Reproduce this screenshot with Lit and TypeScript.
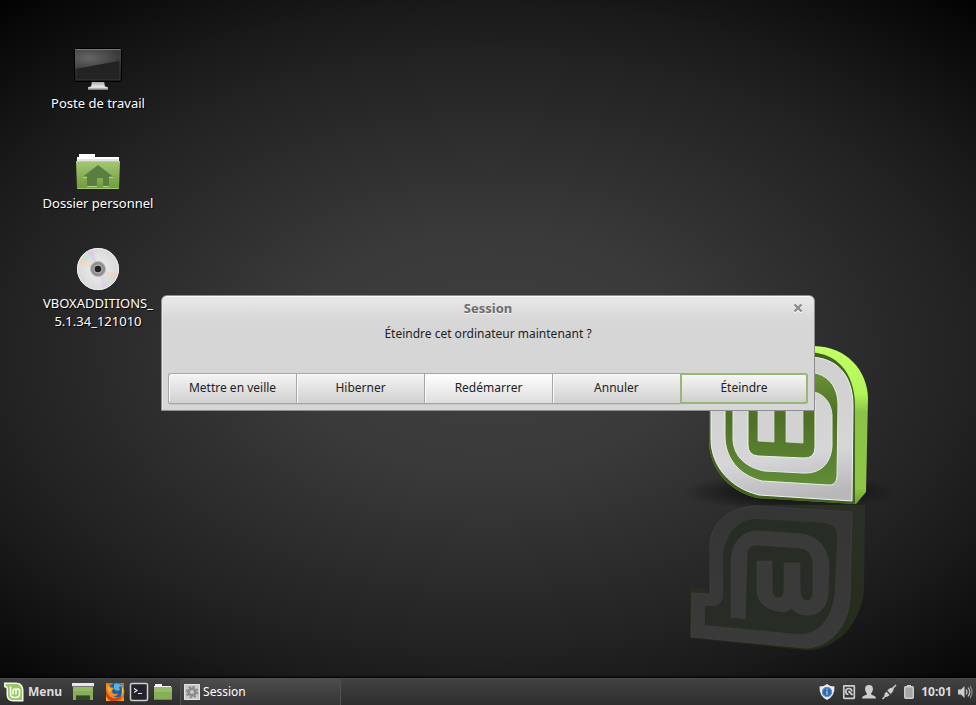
import { LitElement, html, css, svg } from "lit";
import { customElement, property } from "lit/decorators.js";
import { classMap } from "lit/directives/class-map.js";

const monitorIcon = html`<svg class="art" viewBox="0 0 48 48" aria-hidden="true">
  <defs>
    <linearGradient id="scr" x1="0" y1="0" x2="0" y2="1"><stop offset="0" stop-color="#4e4e4e" /><stop offset="1" stop-color="#1c1c1c" /></linearGradient>
    <radialGradient id="gls" cx="0.300" cy="0.450" r="0.700"><stop offset="0" stop-color="#7c7c7c" /><stop offset="1" stop-color="#404040" /></radialGradient>
    <linearGradient id="std" x1="0" y1="0" x2="0" y2="1"><stop offset="0" stop-color="#999" /><stop offset="1" stop-color="#eee" /></linearGradient>
  </defs>
  <path d="M18 36h12l1 6H17z" fill="url(#std)" />
  <path d="M14 44.500V43q0-1.500 3-1.500h14q3 0 3 1.500v1.500z" fill="#ddd" />
  <path d="M14 44h20" stroke="#888" />
  <rect x="0.500" y="3.500" width="47" height="33" rx="1" fill="url(#scr)" stroke="#000" />
  <rect x="2.500" y="5.500" width="43" height="29" fill="#232323" stroke="#2f2f2f" />
  <path d="M1 4h46v11.500L1 24z" fill="url(#gls)" opacity="0.750" />
  <path d="M1.500 4.500h45" stroke="#777" />
</svg>`;

const homeFolderIcon = html`<svg class="art" viewBox="0 0 48 48" aria-hidden="true">
  <defs><linearGradient id="fld" x1="0" y1="0" x2="0" y2="1"><stop offset="0" stop-color="#a4c873" /><stop offset="1" stop-color="#6f9b3a" /></linearGradient></defs>
  <path d="M5 9h16v3h24v6H3v-6h2z" fill="#fff" />
  <path d="M3.500 15h41" stroke="#c8c8c8" />
  <path d="M2 16h44l-1 28H3z" fill="url(#fld)" />
  <path d="M2.500 16.500h43M3.500 43.500h41" stroke="#bcdc90" opacity="0.700" />
  <path d="M9 32.500h4M35 32.500h4M13 41.500h10M29 41.500h6M23 32.500h6" stroke="#b4d68a" />
  <path d="M24 20 9 31.500h4V41h10v-8h6v8h6v-9.500h4z" fill="#597f40" />
</svg>`;

const discIcon = html`<svg class="art" viewBox="0 0 48 48" aria-hidden="true">
  <defs><radialGradient id="dsc"><stop offset="0" stop-color="#f2f2f2" /><stop offset="1" stop-color="#d8d8d8" /></radialGradient></defs>
  <circle cx="24" cy="24" r="21" fill="url(#dsc)" />
  <g opacity="0.500">
    <path d="M24 24 4.500 19 8 11z" fill="#f7d3b6" />
    <path d="M24 24 8 11l5-4z" fill="#b8ead8" />
    <path d="M24 24 13 7l6-3z" fill="#dcc0ee" />
    <path d="M24 24 43.500 29 40 36z" fill="#f7d0b0" />
    <path d="M24 24 40 36l-5 5z" fill="#bfead0" />
    <path d="M24 24 35 41l-6 3z" fill="#e2c4f0" />
  </g>
  <circle cx="24" cy="24" r="20.500" fill="none" stroke="#f0f0f0" />
  <circle cx="24" cy="24" r="7.500" fill="#8f8f8f" stroke="#b8b8b8" />
  <circle cx="24" cy="24" r="4.500" fill="#b0b0b0" />
  <circle cx="24" cy="24" r="3.300" fill="#202020" />
</svg>`;

const wallpaper = svg`
  <defs>
    <linearGradient id="side" x1="0" y1="346" x2="0" y2="504" gradientUnits="userSpaceOnUse">
      <stop offset="0" stop-color="#c2ff68" /><stop offset="0.300" stop-color="#b2f556" /><stop offset="0.420" stop-color="#8cc247" /><stop offset="0.900" stop-color="#8fc648" /><stop offset="1" stop-color="#6d9c30" />
    </linearGradient>
    <linearGradient id="face" x1="760" y1="360" x2="780" y2="500" gradientUnits="userSpaceOnUse">
      <stop offset="0" stop-color="#cfcfcf" /><stop offset="0.700" stop-color="#d6d6d8" /><stop offset="1" stop-color="#b8b8ba" />
    </linearGradient>
    <linearGradient id="well" x1="0" y1="370" x2="0" y2="485" gradientUnits="userSpaceOnUse">
      <stop offset="0" stop-color="#6c9338" /><stop offset="0.400" stop-color="#4d6f26" /><stop offset="1" stop-color="#628c38" />
    </linearGradient>
    <linearGradient id="mside" x1="0" y1="505" x2="0" y2="650" gradientUnits="userSpaceOnUse">
      <stop offset="0" stop-color="#2b3027" /><stop offset="1" stop-color="#232c19" />
    </linearGradient>
    <linearGradient id="mface" x1="0" y1="505" x2="0" y2="650" gradientUnits="userSpaceOnUse">
      <stop offset="0" stop-color="#353535" /><stop offset="1" stop-color="#3a3a3a" />
    </linearGradient>
    <radialGradient id="cast"><stop offset="0" stop-color="#000" stop-opacity="0.700" /><stop offset="0.600" stop-color="#000" stop-opacity="0.350" /><stop offset="1" stop-color="#000" stop-opacity="0" /></radialGradient>
  </defs>
  <ellipse cx="790" cy="492" rx="108" ry="18" fill="url(#cast)" />
  <path d="M690 587 710 589V545C711 522 730 506 757 505L865 505 864 590C861 622 838 651 805 650L690 638Z" fill="url(#mside)" />
  <path d="M692 593 710 594V545C711 522 730 507 755 506L852 512 850 598C848 630 827 648 805 648L691 637Z" fill="url(#mface)" stroke="#424242" stroke-width="0.700" />
  <path d="M705 606H713Q722 606 723 596V557C724 535 738 519 756 519L825 523Q836 525 837 535L835 590C833 620 816 636 797 634L705 625Z" fill="#272c24" />
  <path d="M731 617V560C732 542 743 531 757 531L802 534C820 537 829 550 829 568L828 592C828 606 820 615 808 615 801 615 795 613 792 608 787 612 783 612 778 611 764 609 757 600 757 590V561H772V590Q772 598 778 598 784 598 784 590V563H800V590Q801 601 807 601 813 600 813 592V566C813 554 808 549 800 548L757 545Q747 545 747 555L745 619Z" fill="#3a3a3a" stroke="#414141" stroke-width="0.600" />
  <path d="M709 346H814C847 347 867 370 868 398L866 492 856 504 757 498C728 491 709 468 709 440Z" fill="url(#side)" />
  <path d="M709 352H806C838 352 854 373 855 404V504L757 498C728 491 709 468 709 440Z" fill="#41631f" />
  <path d="M711 357H808C837 357 853 375 853 406L852 501 759 495C730 488 711 466 711 439Z" fill="url(#face)" stroke="#f2f2f2" />
  <path d="M725 372H808C829 373 838 388 838 405L837 477Q836 486 828 485L762 481C738 475 725 457 725 436Z" fill="url(#well)" stroke="#e9efe0" />
  <path d="M733 391H806C822 391 831 401 832 415V446C831 463 821 474 803 473L764 471C745 467 734 456 733 440Z" fill="url(#face)" stroke="#e8e8e8" />
  <path d="M748 400H815V447Q815 459 803 458L758 456Q748 455 748 445Z" fill="url(#well)" stroke="#eef2e8" />
  <path d="M758 400H774V442L758 441ZM786 400H803V443L786 442Z" fill="#d2d2d2" stroke="#e4e4e4" stroke-width="0.700" />
`;

const menuIcon = html`<svg class="i20" viewBox="0 0 20 20" aria-hidden="true">
  <path d="M0 0.500h11.500C17 0.500 19.500 4 19.500 8.500v11H9.500C4.500 19.500 2.500 16.500 2.500 12.500V7.500C2.500 6 2 5.500 0 5.200z" fill="#f4f8ee" />
  <path d="M1.500 2h10C16 2 18 4.500 18 8.500V18H9.500C5.500 18 4 15.500 4 12.500V7C4 5 3 4.200 1.500 4z" fill="#98c864" />
  <path d="M6.500 4.500v7q0 4 4 4h1q4 0 4-4V9q0-2-1.700-2T12 9v3.500M12 9q0-2-1.500-2T9 9v3.500" fill="none" stroke="#fff" stroke-width="1.500" />
</svg>`;

const showDesktopIcon = html`<svg class="i22" viewBox="0 0 22 20" aria-hidden="true">
  <path d="M0 1h22v3H0z" fill="#e8e8e8" /><path d="M0 4.500h22" stroke="#777" />
  <path d="M1 5h20v13H1z" fill="#86b058" /><path d="M1 5h20v4H1z" fill="#93bb66" />
  <path d="M4 13h14v5H4z" fill="#35452a" /><path d="M4 13.500h14" stroke="#547038" />
</svg>`;

const firefoxIcon = html`<svg class="i20" viewBox="0 0 20 20" aria-hidden="true">
  <path d="M1 1h18v18H1z" fill="#e66a1b" />
  <circle cx="11.500" cy="8" r="7.500" fill="#1f5f9e" />
  <path d="M9 2q5-2 8 2l-3 1 1 3-3 1-3-2z" fill="#58b2dc" />
  <path d="M1 1q3 1 4 4l4 1-2 3q0 3 4 3l2-1q-1 4-5 3 5 4 9-1 2-3 1-8 2 2 1 7-2 6-8 7H1z" fill="#ef8b20" />
  <path d="M1 7q1 7 7 9 6 1 9-4 0 6-7 7H5Q1 16 1 12z" fill="#cf4317" />
  <path d="M16 2q3 4 2 9l-2 4q2-7 0-13z" fill="#ffcd38" />
  <path d="M1 19v-4q2 3 5 4zM19 19v-4q-2 3-5 4z" fill="#f5a728" />
  <path d="M3 4 7 7 5 10Q2 8 3 4z" fill="#f7b038" />
</svg>`;

const terminalIcon = html`<svg class="i20" viewBox="0 0 20 20" aria-hidden="true">
  <rect x="1.500" y="1.500" width="17" height="17" rx="1.500" fill="#23232b" stroke="#cfcfcf" stroke-width="1.500" />
  <path d="m5 6.500 3 2-3 2M9 11.500h4" fill="none" stroke="#e6e6e6" stroke-width="1.200" />
</svg>`;

const folderIcon = html`<svg class="i20" viewBox="0 0 20 20" aria-hidden="true">
  <path d="M2 2h7v2h9v3H1V4h1z" fill="#f5f5f5" /><path d="M1 5h18v13H1z" fill="#86b058" /><path d="M1 5h18v5H1z" fill="#95bc69" /><path d="M1 17.500h18" stroke="#668c3e" />
</svg>`;

const gearIcon = html`<svg class="i16" viewBox="0 0 16 16" aria-hidden="true">
  <rect width="16" height="16" rx="1" fill="#c9c9c9" /><path d="M0.500 0.500h15v15h-15z" fill="none" stroke="#e2e2e2" />
  <circle cx="8" cy="8" r="5.300" fill="none" stroke="#8a8a8a" stroke-width="2" stroke-dasharray="2.100 2.060" />
  <circle cx="8" cy="8" r="3.400" fill="none" stroke="#8a8a8a" stroke-width="2.600" />
</svg>`;

const shieldIcon = html`<svg class="i16" viewBox="0 0 16 16" aria-hidden="true">
  <path d="M8 0q3 2.500 7.500 2.500Q16 12 8 16 0 12 0.500 2.500 5 2.500 8 0z" fill="#ececec" />
  <circle cx="8" cy="8" r="5" fill="#2d68ad" /><circle cx="8" cy="8" r="4.500" fill="none" stroke="#5f97d2" />
  <path d="M8 6.800v4M8 4.700v1.300" stroke="#a9c9ec" stroke-width="1.400" />
</svg>`;

const updateIcon = html`<svg class="i16" viewBox="0 0 16 16" aria-hidden="true">
  <rect x="2.800" y="1.800" width="10.500" height="12.500" rx="0.500" fill="none" stroke="#cdcdcd" stroke-width="1.700" />
  <path d="M7.500 10.500A3 3 0 1 1 10.800 7.500" fill="none" stroke="#cdcdcd" stroke-width="1.700" />
  <path d="m7.500 7 4 4" stroke="#cdcdcd" stroke-width="1.800" />
</svg>`;

const userIcon = html`<svg class="i16" viewBox="0 0 16 16" aria-hidden="true">
  <path d="M8 1c3 0 4.200 2 3.900 4.500C11.600 8 10.500 8.500 10 10c0 1.500 5 1 5 4.500H1C1 11 6 11.500 6 10 5.500 8.500 4.400 8 4.100 5.500 3.800 3 5 1 8 1z" fill="#cdcdcd" />
</svg>`;

const networkIcon = html`<svg class="i16" viewBox="0 0 16 16" aria-hidden="true">
  <path d="M1.500 15 5 11.500M11 5l4-4" stroke="#cdcdcd" stroke-width="1.500" />
  <path d="M5.300 7.500 8.700 10.900Q7 13.200 3.300 12.900 3 9.500 5.300 7.500z" fill="#cdcdcd" />
  <path d="M6.300 6.500 9.700 9.900Q12.800 7.500 12.700 3.500 8.500 3.400 6.300 6.500z" fill="#cdcdcd" />
</svg>`;

const batteryIcon = html`<svg class="i16" viewBox="0 0 16 16" aria-hidden="true">
  <path d="M6 1h4v2h-4z" fill="#cdcdcd" /><rect x="3.700" y="2.800" width="8.600" height="11.500" rx="1" fill="#a5a5a5" stroke="#cdcdcd" stroke-width="1.400" />
</svg>`;

const volumeIcon = html`<svg class="i16" viewBox="0 0 16 16" aria-hidden="true">
  <path d="M1 5.500h3L7.500 2v12L4 10.500H1z" fill="#cdcdcd" />
  <path d="M9 5.500q2 2.500 0 5M11 3.500q3.500 4.500 0 9" fill="none" stroke="#c4c4c4" stroke-width="1.200" />
  <path d="M13 1.800q4 6.200 0 12.400" fill="none" stroke="#8a8a8a" stroke-width="1.200" />
</svg>`;

@customElement("desktop-shortcut")
export class DesktopShortcut extends LitElement {
  @property({ attribute: false }) icon: unknown;
  @property({ attribute: false }) lines: string[] = [];

  static styles = css`
    button {
      display: flex;
      flex-direction: column;
      align-items: center;
      width: 120px;
      min-height: 100px;
      padding: 0;
      border: 0;
      background: none;
      color: #fff;
      font: 13px/18px "Noto Sans", sans-serif;
      text-shadow: 1px 1px 1px #000;
    }
    .art { width: 48px; height: 48px; margin-bottom: 1px; }
    .line { display: block; white-space: nowrap; }
  `;

  render() {
    return html`<button type="button">${this.icon}${this.lines.map((l) => html`<span class="line">${l}</span>`)}</button>`;
  }
}

@customElement("session-dialog")
export class SessionDialog extends LitElement {
  static styles = css`
    :host { display: block; font: 12px/18px "Noto Sans", sans-serif; }
    .dialog {
      box-sizing: border-box;
      padding: 2px 6px 6px;
      border: 1px solid #8e8e8e;
      border-radius: 6px 6px 0 0;
      background: linear-gradient(#e9e9e9, #d6d6d6 26px);
      box-shadow: inset 0 1px #fafafa, inset 1px 0 #e6e6e6;
      color: #222;
    }
    .title { display: grid; grid-template-columns: 20px 1fr 20px; align-items: center; }
    h1 {
      grid-column: 2;
      margin: 0;
      text-align: center;
      font-size: 13px;
      line-height: 20px;
      color: #6b6b6b;
      text-shadow: 0 1px #f4f4f4;
    }
    .close { display: grid; place-items: center; height: 20px; padding: 0; border: 0; background: none; }
    .close svg { width: 10px; height: 10px; }
    p { margin: 7px 0 30px; text-align: center; }
    .actions { display: grid; grid-template-columns: repeat(5, 1fr); }
    .action {
      height: 31px;
      padding: 0;
      border: 1px solid #a6a6a6;
      border-right-width: 0;
      background: linear-gradient(#f5f5f5, #d0d0d0);
      box-shadow: inset 1px 1px #fbfbfb, 0 1px #c6c6c6;
      color: inherit;
      font: inherit;
    }
    .action:first-child { border-radius: 3px 0 0 3px; }
    .action.bright { background: linear-gradient(#fff, #dedede); }
    .action.primary { border: 2px solid #95b879; border-radius: 0 3px 3px 0; box-shadow: none; }
  `;

  render() {
    const actions = ["Mettre en veille", "Hiberner", "Redémarrer", "Annuler", "Éteindre"];
    return html`<section class="dialog" role="dialog" aria-labelledby="t" aria-describedby="m">
      <header class="title">
        <h1 id="t">Session</h1>
        <button class="close" type="button" aria-label="Fermer">
          <svg viewBox="0 0 10 10"><path d="m1.500 2.500 7 7m0-7-7 7" stroke="#fff" stroke-width="2.200" /><path d="m1.500 1.500 7 7m0-7-7 7" stroke="#8c8c8c" stroke-width="2.400" /></svg>
        </button>
      </header>
      <p id="m">Éteindre cet ordinateur maintenant ?</p>
      <div class="actions">
        ${actions.map((a, i) => html`<button type="button" class=${classMap({ action: true, bright: i === 2, primary: i === 4 })}>${a}</button>`)}
      </div>
    </section>`;
  }
}

@customElement("app-root")
export class AppRoot extends LitElement {
  static styles = css`
    :host {
      display: flex;
      flex-direction: column;
      position: relative;
      min-height: 100vh;
      overflow: hidden;
      background: radial-gradient(ellipse 80% 68% at 50% 50%, #3f3f3f, #3a3a3a 25%, #2f2f2f 42%, #222 62%, #191919 73%, #020202 97%);
      font: 12px/18px "Noto Sans", sans-serif;
    }
    .wallpaper { position: absolute; inset: 0; width: 100%; height: 100%; }
    .shortcuts {
      position: relative;
      flex: 1;
      display: flex;
      flex-direction: column;
      align-items: flex-start;
      padding: 45px 38px 0;
    }
    .overlay { position: absolute; inset: 0; display: grid; place-items: center; }
    .overlay session-dialog { width: 67%; }
    .panel {
      position: relative;
      display: flex;
      align-items: center;
      height: 27px;
      padding: 0 3px 0 4px;
      background: linear-gradient(#434343, #2d2d2d);
      box-shadow: inset 0 1px #4a4a4a, 0 -1px 2px #000;
      color: #dcdcdc;
    }
    .panel button {
      display: flex;
      align-items: center;
      padding: 0;
      border: 0;
      background: none;
      color: inherit;
      font: inherit;
    }
    .panel .menu { gap: 4px; font-weight: 700; }
    .launchers { display: flex; align-items: center; gap: 4px; margin-left: 10px; }
    .panel .show { margin-right: 7px; }
    .panel .task {
      align-self: stretch;
      gap: 3px;
      width: 161px;
      margin: 1px 0 0 7px;
      padding: 0 3px 2px;
      border: 1px solid #505050;
      border-bottom: 0;
      border-radius: 4px 4px 0 0;
      background: linear-gradient(#4c4c4c, #343434);
      color: #fff;
      box-sizing: border-box;
    }
    .tray { display: flex; align-items: center; gap: 4px; margin-left: auto; }
    .panel .updates { margin-right: 2px; }
    .clock { margin-right: 1px; font-weight: 700; }
    .i16 { width: 16px; height: 16px; display: block; }
    .i20 { width: 20px; height: 20px; display: block; }
    .i22 { width: 22px; height: 20px; display: block; }
  `;

  render() {
    return html`
      <svg class="wallpaper" viewBox="0 0 976 705" preserveAspectRatio="xMidYMid slice" aria-hidden="true">${wallpaper}</svg>
      <main class="shortcuts">
        <desktop-shortcut .icon=${monitorIcon} .lines=${["Poste de travail"]}></desktop-shortcut>
        <desktop-shortcut .icon=${homeFolderIcon} .lines=${["Dossier personnel"]}></desktop-shortcut>
        <desktop-shortcut .icon=${discIcon} .lines=${["VBOXADDITIONS_", "5.1.34_121010"]}></desktop-shortcut>
      </main>
      <footer class="panel">
        <button class="menu" type="button">${menuIcon}<span>Menu</span></button>
        <div class="launchers">
          <button class="show" type="button" aria-label="Afficher le bureau">${showDesktopIcon}</button>
          <button type="button" aria-label="Firefox">${firefoxIcon}</button>
          <button type="button" aria-label="Terminal">${terminalIcon}</button>
          <button type="button" aria-label="Fichiers">${folderIcon}</button>
        </div>
        <button class="task" type="button">${gearIcon}<span>Session</span></button>
        <div class="tray">
          <button class="updates" type="button" aria-label="Mises à jour">${shieldIcon}</button>
          <button type="button" aria-label="Disques">${updateIcon}</button>
          <button type="button" aria-label="Utilisateur">${userIcon}</button>
          <button type="button" aria-label="Réseau">${networkIcon}</button>
          <button type="button" aria-label="Batterie">${batteryIcon}</button>
          <time class="clock">10:01</time>
          <button type="button" aria-label="Son">${volumeIcon}</button>
        </div>
      </footer>
      <div class="overlay"><session-dialog></session-dialog></div>
    `;
  }
}
